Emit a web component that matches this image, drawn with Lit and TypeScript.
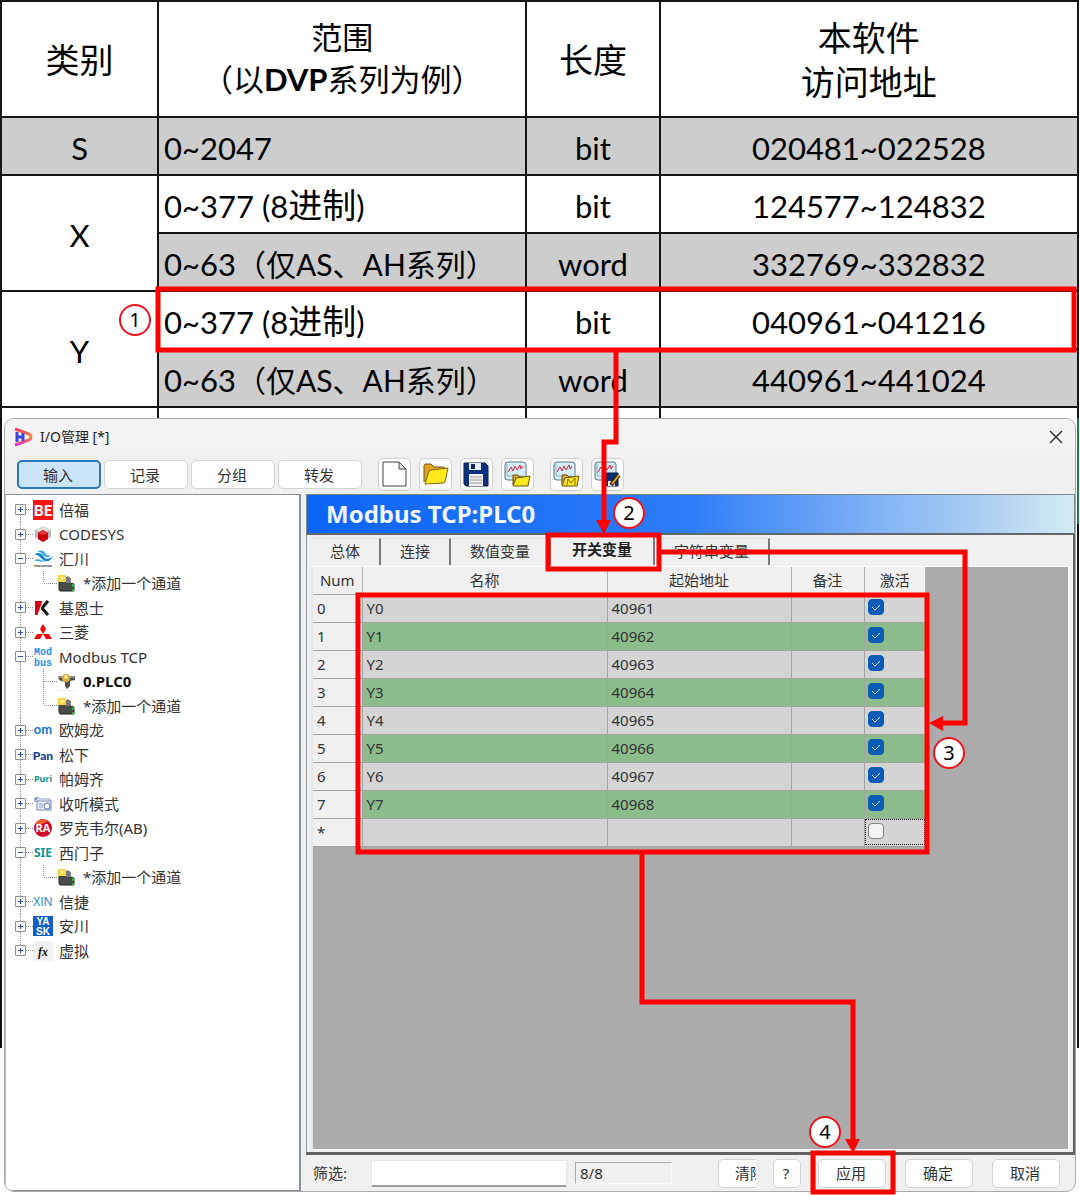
import { LitElement, html, svg, css, nothing } from "lit";
import { customElement } from "lit/decorators.js";
import { classMap } from "lit/directives/class-map.js";

const glyphs = {
  be: svg`<rect width="20" height="20" fill="#f61414"/><text x="10" y="16" font-size="15" font-weight="900" text-anchor="middle" fill="#fff" font-family="Lato">BE</text>`,
  codesys: svg`<path d="M2 6L10 2L18 6V13L10 18L2 13Z" fill="#b9b9b9"/><path d="M2 6L10 2L18 6L10 9Z" fill="#dedede"/><path d="M5 9L10 6L15 9V15L10 18L5 15Z" fill="#c8000a"/><path d="M5 9L10 6L15 9L10 11Z" fill="#e8343a"/>`,
  inovance: svg`<path d="M1 6C6 2 9 5 11 8C13 11 17 10 20 7C17 14 12 13 9 10C6 7 4 5 1 6Z" fill="#1887c9"/><path d="M4 3C8 0 11 2 12 4C14 7 16 7 18 6C15 10 12 8 10 6C8 3 6 2 4 3Z" fill="#37a5dd"/><path d="M1 12C5 8 9 12 12 12C10 14 5 11 1 12Z" fill="#37a5dd"/><text x="10" y="18" font-size="4" font-weight="700" text-anchor="middle" fill="#444" font-family="Noto Sans">inovance</text>`,
  keyence: svg`<path d="M2 3H10L5 17H2Z" fill="#d6000f"/><path d="M15 3L9 10L15 17" fill="none" stroke="#151515" stroke-width="3"/><path d="M10 3L5 17" stroke="#fff"/>`,
  mitsubishi: svg`<path d="M10 2L13 7L10 12L7 7Z M10 12L7 17H1L4 12Z M10 12H16L19 17H13Z" fill="#f40000"/>`,
  modbus: svg`<text x="10" y="8" font-size="10" text-anchor="middle" fill="#1f8fe8" font-family="Liberation Mono" font-weight="700">Mod</text><text x="10" y="19" font-size="10" text-anchor="middle" fill="#1f8fe8" font-family="Liberation Mono" font-weight="700">bus</text>`,
  omron: svg`<text x="10" y="14" font-size="13" text-anchor="middle" fill="#1473d8" font-family="Lato" font-weight="700">om</text>`,
  pan: svg`<text x="10" y="15" font-size="12" text-anchor="middle" fill="#123f93" font-family="Lato" font-weight="900">Pan</text>`,
  puri: svg`<text x="10" y="13" font-size="9" text-anchor="middle" fill="#129292" font-family="Noto Sans" font-weight="700">Puri</text>`,
  radio: svg`<path d="M2 4L5 7M2 8V4H6" fill="none" stroke="#5668a8"/><rect x="4" y="7" width="14" height="9" fill="#e8ecf7" stroke="#7886b8"/><path d="M6 5H17V7M7 9V14M9 9V14" fill="none" stroke="#8da0cc"/><circle cx="14" cy="12" r="3" fill="#fff" stroke="#6576b3"/>`,
  rockwell: svg`<circle cx="10" cy="10" r="9" fill="#cf0a2c"/><path d="M2 6A9 9 0 0 1 15 3L9 6Z" fill="#f0612b"/><text x="10" y="14" font-size="11" text-anchor="middle" fill="#fff" font-family="Open Sans" font-weight="700">RA</text>`,
  sie: svg`<text x="10" y="14" font-size="12" text-anchor="middle" fill="#0d9494" font-family="Noto Sans" font-weight="700">SIE</text>`,
  xin: svg`<text x="10" y="14" font-size="12" text-anchor="middle" fill="#1885c6" font-family="Open Sans">XIN</text>`,
  yask: svg`<rect width="20" height="20" fill="#0f5fc6"/><text x="10" y="9" font-size="10" text-anchor="middle" fill="#fff" font-family="Liberation Sans" font-weight="700">YA</text><text x="10" y="19" font-size="10" text-anchor="middle" fill="#fff" font-family="Liberation Sans" font-weight="700">SK</text>`,
  fx: svg`<rect width="20" height="20" fill="#f1f1f1"/><text x="10" y="15" font-size="12" font-style="italic" text-anchor="middle" fill="#111" font-family="Liberation Serif" font-weight="700">fx</text>`,
  add: svg`<path d="M2 9L8 5H13V10L17 11V18H3L2 16Z" fill="#4b4b48" stroke="#222"/><path d="M8 5L11 3L13 5V10H9Z" fill="#777"/><rect x="1" y="2" width="8" height="7" fill="#f4d53d"/><path d="M5 3V8M3 5H8" stroke="#fff6ae"/><rect x="15" y="11" width="2" height="3" fill="#12c32a"/><rect x="15" y="16" width="2" height="2" fill="#12c32a"/>`,
  plc: svg`<path d="M1 5H18V9L13 10V15L10 18L8 15V11L2 9Z" fill="#4e4e4e"/><path d="M1 5H18V7H1Z" fill="#8f8f8f"/><circle cx="9" cy="7" r="4" fill="#d9ab38"/><circle cx="9" cy="6" r="2" fill="#fbe9a0"/><path d="M0 20H19" stroke="#ddd"/>`,
};

const chart = svg`<rect x="1" y="1" width="21" height="18" rx="3" fill="#d5eff8" stroke="#5d7583"/><path d="M3 3V15M3 15H19" stroke="#8eb7c7" fill="none"/><path d="M4 11L7 6L9 10L11 5L13 9L16 4L17 8L19 5" fill="none" stroke="#cf2438"/>`;
const folder = svg`<path d="M9 24V14H14L16 16H23V24Z" fill="#dfa11e" stroke="#685313"/><path d="M9 25L12 17L26 15L24 25Z" fill="#ffe91d" stroke="#685313"/>`;
const tools = {
  page: svg`<path d="M2 1H18L25 8V25H2Z" fill="#fff" stroke="#444"/><path d="M18 1V8H25Z" fill="#e5e5e5" stroke="#444"/>`,
  open: svg`<path d="M2 21V5Q2 3 4 3H9L12 6H21Q23 6 23 8V9" fill="#e2a21b" stroke="#775a16"/><path d="M3 23L7 10Q8 9 9 9L26 7L23 21Q22 22 21 22Z" fill="#ffe81c" stroke="#7b6810"/>`,
  save: svg`<path d="M1 2H22L25 5V25H3L1 23Z" fill="#0a3082" stroke="#091d4e"/><path d="M6 2H18V9H6Z" fill="#e8edf3"/><rect x="8" y="3" width="4" height="5" fill="#14285a"/><rect x="6" y="13" width="14" height="12" fill="#f1f1f1"/><path d="M7 16H19M7 19H19M7 22H19" stroke="#999"/>`,
  chartOpen: svg`${chart}${folder}`,
  chartM: svg`${chart}${folder}<path d="M14 24L15 18L18 22L22 17V24" fill="none" stroke="#8b6b00"/>`,
  chartSave: svg`${chart}<path d="M12 12H24V25H13L12 24Z" fill="#0b2e79" stroke="#0a1c48"/><rect x="14" y="20" width="7" height="5" fill="#e9e9e9"/><path d="M17 24L25 14" stroke="#342a10" stroke-width="4"/><path d="M18 23L25 14" stroke="#e5a11b" stroke-width="2"/>`,
};

interface TreeNode {
  label: string;
  icon: keyof typeof glyphs;
  open?: boolean;
  child?: boolean;
  more?: boolean;
  bold?: boolean;
}

const addChannel: TreeNode = { label: "*添加一个通道", icon: "add", child: true };
const nodes: TreeNode[] = [
  { label: "倍福", icon: "be" },
  { label: "CODESYS", icon: "codesys" },
  { label: "汇川", icon: "inovance", open: true },
  addChannel,
  { label: "基恩士", icon: "keyence" },
  { label: "三菱", icon: "mitsubishi" },
  { label: "Modbus TCP", icon: "modbus", open: true },
  { label: "0.PLC0", icon: "plc", child: true, more: true, bold: true },
  addChannel,
  { label: "欧姆龙", icon: "omron" },
  { label: "松下", icon: "pan" },
  { label: "帕姆齐", icon: "puri" },
  { label: "收听模式", icon: "radio" },
  { label: "罗克韦尔(AB)", icon: "rockwell" },
  { label: "西门子", icon: "sie", open: true },
  addChannel,
  { label: "信捷", icon: "xin" },
  { label: "安川", icon: "yask" },
  { label: "虚拟", icon: "fx" },
];

@customElement("address-sheet")
class AddressSheet extends LitElement {
  static styles = css`
    :host { display: block; padding-right: 1px; }
    .sheet {
      width: 100%; border-collapse: collapse; table-layout: fixed; color: #000;
      font: 31px/44px Lato, "Noto Sans CJK SC", sans-serif;
      border: 2px solid #000; border-bottom: 0;
    }
    .sheet th, .sheet td { border: 2px solid #151515; padding: 3px 0 0; height: 53px; text-align: center; font-weight: 400; }
    .sheet .range { text-align: left; padding-left: 5px; white-space: nowrap; }
    .sheet .head { height: 112px; padding: 2px 0 0; font-size: 34px; }
    .sheet .narrow { padding: 0 0 2px; font-size: 31px; line-height: 42px; white-space: nowrap; }
    .shade { background: #cdcdcd; }
    .kind { width: 14.4%; }
    .span { width: 34%; }
    .size { width: 12.2%; }
    .big { font-size: 34px; line-height: 40px; }
    .note { font-size: 30px; }
    .sheet .stub { height: 10px; padding: 0; border-bottom: 0; }
  `;
  render() {
    const octal = html`0~377 (8<span class="big">进制</span>)`;
    const series = html`0~63<span class="note">（仅AS、AH系列）</span>`;
    return html`
      <table class="sheet">
        <thead>
          <tr>
            <th class="head kind">类别</th>
            <th class="head span narrow">范围<br />（以<b>DVP</b>系列为例）</th>
            <th class="head size">长度</th>
            <th class="head">本软件<br />访问地址</th>
          </tr>
        </thead>
        <tbody>
          <tr class="shade"><td>S</td><td class="range">0~2047</td><td>bit</td><td>020481~022528</td></tr>
          <tr><td rowspan="2">X</td><td class="range">${octal}</td><td>bit</td><td>124577~124832</td></tr>
          <tr class="shade"><td class="range">${series}</td><td>word</td><td>332769~332832</td></tr>
          <tr><td rowspan="2">Y</td><td class="range">${octal}</td><td>bit</td><td>040961~041216</td></tr>
          <tr class="shade"><td class="range">${series}</td><td>word</td><td>440961~441024</td></tr>
          <tr><td class="stub"></td><td class="stub"></td><td class="stub"></td><td class="stub"></td></tr>
        </tbody>
      </table>
    `;
  }
}

@customElement("driver-tree")
class DriverTree extends LitElement {
  static styles = css`
    :host { display: block; box-sizing: border-box; background: #fff; border: 1px solid #8a9099; border-right-width: 2px; border-left-color: #b9bcc2; padding-top: 2px; }
    .list { list-style: none; margin: 0; padding: 0; }
    .row { display: flex; align-items: center; height: 24px; white-space: nowrap; }
    .row:nth-child(odd) { height: 25px; }
    .lead { display: grid; align-self: stretch; align-items: center; width: 27px; }
    .lead.deep { width: 51px; }
    .guide, .toggle { grid-area: 1 / 1; }
    .guide { width: 100%; height: 100%; display: block; }
    .guide path { fill: none; stroke: #8c8c8c; stroke-dasharray: 1 1; }
    .toggle { width: 11px; height: 11px; margin-left: 9px; padding: 0; border: 1px solid #8f8f8f; border-radius: 1px; background: #fbfbfb; }
    .toggle svg { display: block; }
    .icon { width: 20px; height: 20px; flex: none; }
    .label { margin-left: 6px; }
    .bold { font-weight: 700; color: #111; }
  `;
  private guide(n: TreeNode, i: number) {
    const last = i === nodes.length - 1;
    const main = i === 0 ? "M14.5 12V25" : last ? "M14.5 0V12" : "M14.5 0V25";
    const branch = n.child ? `M37.5 0V${n.more ? 25 : 12}M38 12.5H51` : "M20 12.5H27";
    return html`<svg class="guide"><path d=${main} /><path d=${branch} /></svg>`;
  }
  render() {
    return html`<ul class="list">
      ${nodes.map(
        (n, i) => html`<li class="row">
          <span class=${classMap({ lead: true, deep: !!n.child })}>
            ${this.guide(n, i)}
            ${n.child
              ? nothing
              : html`<button class="toggle" aria-label=${n.label} aria-expanded=${n.open ? "true" : "false"}>
                  <svg width="9" height="9"><path d=${n.open ? "M2 4.5H7" : "M2 4.5H7M4.5 2V7"} stroke="#2c4f9e" /></svg>
                </button>`}
          </span>
          <svg class="icon" viewBox="0 0 20 20">${glyphs[n.icon]}</svg>
          <span class=${classMap({ label: true, bold: !!n.bold })}>${n.label}</span>
        </li>`
      )}
    </ul>`;
  }
}

@customElement("variable-grid")
class VariableGrid extends LitElement {
  static styles = css`
    :host { display: block; background: #ababab; border: 1px solid #fff; border-left: 2px solid #e6e6e6; border-right-width: 2px; }
    .grid { width: 613px; max-width: 100%; border-collapse: collapse; table-layout: fixed; }
    .grid th { box-sizing: border-box; height: 27px; padding: 0; background: #f0f0f0; font-weight: 400; border-right: 1px solid #b0b0b0; }
    .grid td { height: 27px; padding: 0 4px; background: #d4d4d4; border: 1px solid #a3a3a3; border-left: 0; }
    .grid .even td { background: #8dbc8c; }
    .grid .num.num { background: #f0f0f0; }
    .idx { width: 49px; }
    .name { width: 245px; }
    .addr { width: 184px; }
    .memo { width: 73px; }
    .grid .fresh { outline: 1px dotted #222; outline-offset: -2px; }
    .grid .tick { padding: 0 3px; }
    .box { appearance: none; display: block; width: 16px; height: 16px; margin: 0 0 3px; border: 1px solid #858585; border-radius: 4px; background: #f4f4f4; }
    .box:checked {
      border-color: #0a5cb4;
      background: #0a5cb4 url("data:image/svg+xml,%3Csvg xmlns='http://www.w3.org/2000/svg' width='14' height='14'%3E%3Cpath d='M3 7L6 10L11 5' fill='none' stroke='%23cfe3f6'/%3E%3C/svg%3E") center no-repeat;
    }
  `;
  render() {
    const rows = Array.from({ length: 8 }, (_, i) => i);
    return html`
      <table class="grid">
        <thead>
          <tr><th class="idx">Num</th><th class="name">名称</th><th class="addr">起始地址</th><th class="memo">备注</th><th>激活</th></tr>
        </thead>
        <tbody>
          ${rows.map(
            (i) => html`<tr class=${i % 2 ? "even" : "odd"}>
              <td class="num">${i}</td><td>Y${i}</td><td>${40961 + i}</td><td></td>
              <td class="tick"><input class="box" type="checkbox" checked aria-label="激活 Y${i}" /></td>
            </tr>`
          )}
          <tr>
            <td class="num">*</td><td></td><td></td><td></td>
            <td class="tick fresh"><input class="box" type="checkbox" aria-label="激活" /></td>
          </tr>
        </tbody>
      </table>
    `;
  }
}

@customElement("io-window")
class IoWindow extends LitElement {
  static styles = css`
    :host {
      display: flex; flex-direction: column; box-sizing: border-box; overflow: hidden;
      border: 1px solid #a9a9a9; border-radius: 10px; background: #f0f0f0; color: #333;
      font: 15px/20px "Noto Sans", "Noto Sans CJK SC", sans-serif;
    }
    button, input { font: inherit; color: inherit; box-sizing: border-box; }
    .title { display: flex; align-items: center; height: 36px; padding: 0 10px 0 9px; background: #f3f3f3; }
    .caption { flex: 1; margin-left: 6px; font-size: 14px; color: #222; }
    .close { width: 18px; height: 18px; padding: 0; border: 0; background: none; }
    .close svg, .tool svg { display: block; }
    .bar { display: flex; align-items: center; height: 39px; padding-left: 12px; }
    .modes { display: flex; gap: 3px; margin-right: 16px; }
    .btn { height: 29px; padding: 0 2px 0 0; border: 1px solid #d3d3d3; border-radius: 5px; background: #fdfdfd; }
    .mode { width: 84px; }
    .mode.on { background: #cce4f7; border: 2px solid #2a78b8; }
    .tools { display: flex; gap: 8px; }
    .tool { width: 33px; height: 33px; padding: 2px; border: 1px solid #d0d0d0; border-radius: 5px; background: #fcfcfc; }
    .tool.apart { margin-left: 8px; }
    .body { flex: 1; display: flex; gap: 5px; }
    .side { flex: none; width: 296px; }
    .pane { flex: 1; min-width: 0; display: flex; flex-direction: column; }
    .banner {
      margin: 0; height: 38px; padding-left: 19px; color: #f2f7ff; font-size: 24px; line-height: 38px; font-weight: 700;
      border: 1px solid #7d858e; border-bottom: 2px solid #62676d;
      background: linear-gradient(90deg, #0a64f6, #2e7df7 50%, #78adf5 72%, #b2d3f1 90%, #d3ebf3);
    }
    .frame { flex: 1; display: flex; flex-direction: column; padding: 0 3px 2px 4px; border: 0 solid #626262; border-width: 0 2px 3px 1px; border-left-color: #90969e; }
    .tabs { display: flex; align-items: flex-end; height: 30px; padding-bottom: 1px; }
    .tab { height: 27px; padding: 0 19px 2px; border: 0; border-top: 1px solid #e0e0e0; border-right: 2px solid #7a7a7a; background: #f0f0f0; }
    .tab.on { height: 30px; padding: 0 21px 4px; font-weight: 700; color: #222; }
    .cells { flex: 1; }
    .foot { display: flex; align-items: center; height: 36px; padding: 0 15px 0 7px; }
    .find { display: flex; align-items: center; gap: 24px; }
    .query { width: 196px; height: 27px; border: 1px solid #e6e6e6; border-bottom: 2px solid #9a9a9a; border-radius: 2px; background: #fff; }
    .count { width: 91px; height: 20px; margin: 0 auto 0 8px; padding-left: 4px; border: 1px solid #fafafa; border-top-color: #a8a8a8; border-left-color: #a8a8a8; }
    .clip { width: 38px; margin-right: 17px; overflow: hidden; display: flex; }
    .clip .btn { flex: none; width: 66px; }
    .ask { width: 28px; margin-right: 17px; }
    .acts { display: flex; gap: 19px; }
    .act { width: 68px; }
  `;
  render() {
    const tool = (k: keyof typeof tools, name: string, apart = false) => html`
      <button class=${classMap({ tool: true, apart })} aria-label=${name}>
        <svg width="27" height="27" viewBox="0 0 27 27">${tools[k]}</svg>
      </button>`;
    return html`
      <div class="title">
        <svg width="20" height="20" viewBox="0 0 20 20">
          <defs>
            <linearGradient id="edge" x1="0" y1="0" x2="0" y2="1"><stop stop-color="#f43f6b" /><stop offset=".5" stop-color="#f98a20" /><stop offset="1" stop-color="#e42bd0" /></linearGradient>
          </defs>
          <path d="M1 2L15 7Q19 10 15 13L1 18" fill="none" stroke="url(#edge)" stroke-width="3" />
          <path d="M3 5V15M9 6V14M3 10H9" fill="none" stroke="#3d46e4" stroke-width="3" />
        </svg>
        <span class="caption">I/O管理 [*]</span>
        <button class="close" aria-label="关闭"><svg width="18" height="18"><path d="M3 3L15 15M15 3L3 15" stroke="#222" stroke-width="1.4" /></svg></button>
      </div>
      <div class="bar">
        <div class="modes">
          ${["输入", "记录", "分组", "转发"].map((m, i) => html`<button class=${classMap({ btn: true, mode: true, on: i === 0 })}>${m}</button>`)}
        </div>
        <div class="tools">
          ${tool("page", "新建")}${tool("open", "打开")}${tool("save", "保存")}${tool("chartOpen", "打开图表")}${tool("chartM", "合并图表", true)}${tool("chartSave", "保存图表")}
        </div>
      </div>
      <div class="body">
        <driver-tree class="side"></driver-tree>
        <div class="pane">
          <h1 class="banner">Modbus TCP:PLC0</h1>
          <div class="frame">
            <div class="tabs" role="tablist">
              ${["总体", "连接", "数值变量", "开关变量", "字符串变量"].map(
                (t, i) => html`<button role="tab" aria-selected=${i === 3 ? "true" : "false"} class=${classMap({ tab: true, on: i === 3 })}>${t}</button>`
              )}
            </div>
            <variable-grid class="cells"></variable-grid>
          </div>
          <div class="foot">
            <label class="find">筛选:<input class="query" type="text" /></label>
            <span class="count">8/8</span>
            <span class="clip"><button class="btn">清除</button></span>
            <button class="btn ask">?</button>
            <div class="acts">
              <button class="btn act">应用</button>
              <button class="btn act">确定</button>
              <button class="btn act">取消</button>
            </div>
          </div>
        </div>
      </div>
    `;
  }
}

@customElement("step-marks")
class StepMarks extends LitElement {
  static styles = css`
    :host { position: absolute; inset: 0; pointer-events: none; }
    .ink { position: absolute; inset: 0; width: 100%; height: 100%; }
    .line { fill: none; stroke: #f00; stroke-width: 5; }
    .tip { fill: #f00; }
    .disc { fill: #fff; stroke: #f01218; stroke-width: 2; }
    .no { font: 20px "Noto Sans", sans-serif; text-anchor: middle; fill: #000; }
  `;
  render() {
    const steps = [[135, 320], [629, 513], [949, 753], [825, 1132]];
    return html`<svg class="ink">
      <g class="line">
        <rect x="158" y="289" width="916" height="61" />
        <rect x="548" y="535" width="111" height="34" />
        <rect x="358" y="595" width="569" height="257" />
        <rect x="813" y="1153" width="80" height="39" />
        <path d="M616 350V442H604V522" />
        <path d="M660 552H965V723H941" />
        <path d="M642 852V1002H853V1142" />
      </g>
      <path class="tip" d="M596 520H611L604 534Z M943 716V731L929 723Z M845 1139H860L853 1153Z" />
      ${steps.map(([x, y], i) => svg`<circle class="disc" cx=${x} cy=${y} r="15" /><text class="no" x=${x} y=${y + 7}>${i + 1}</text>`)}
    </svg>`;
  }
}

@customElement("app-root")
class AppRoot extends LitElement {
  static styles = css`
    :host { display: block; background: #fff; }
    .page { position: relative; display: flex; flex-direction: column; min-height: 100vh; }
    .desk { position: relative; flex: 1; display: flex; padding: 0 4px 3px; }
    .desk::before, .desk::after { content: ""; position: absolute; top: 0; bottom: 147px; width: 2px; background: #111; }
    .desk::before { left: 0; }
    .desk::after { right: 1px; background: linear-gradient(#1f7a48 106px, #111 106px); }
    .win { flex: 1; min-width: 0; }
  `;
  render() {
    return html`
      <main class="page">
        <address-sheet></address-sheet>
        <div class="desk"><io-window class="win"></io-window></div>
        <step-marks></step-marks>
      </main>
    `;
  }
}
